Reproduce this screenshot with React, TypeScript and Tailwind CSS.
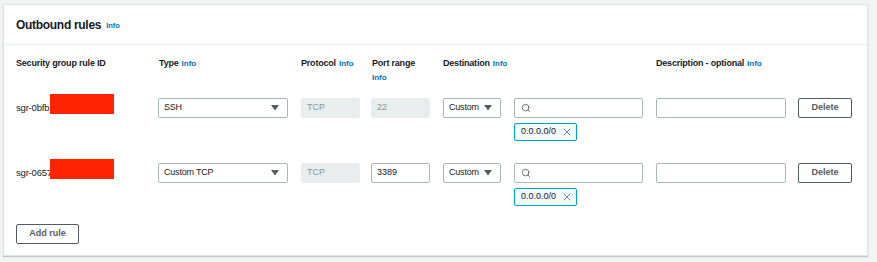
import * as React from 'react';
import { Search, X } from 'lucide-react';

type Rule = {
  id: string;
  type: string;
  protocol: string;
  port: string;
  portLocked: boolean;
};

const RULES: Rule[] = [
  { id: 'sgr-0bfb', type: 'SSH', protocol: 'TCP', port: '22', portLocked: true },
  { id: 'sgr-0657', type: 'Custom TCP', protocol: 'TCP', port: '3389', portLocked: false },
];

function Info() {
  return <span className="text-[8px] font-bold text-[#0073bb] ml-[3px] tracking-normal">Info</span>;
}

function Caret() {
  return (
    <svg width="8" height="6" viewBox="0 0 8 6" className="shrink-0">
      <path d="M0 0 L8 0 L4 5.5 Z" fill="#545b64" />
    </svg>
  );
}

function Select({ value, width }: { value: string; width: string }) {
  return (
    <div className={`${width} h-[20px] border border-[#aab7b8] rounded-[2px] bg-white flex items-center justify-between pl-[5px] pr-[8px] text-[9px] tracking-[-0.2px] text-[#16191f]`}>
      <span>{value}</span>
      <Caret />
    </div>
  );
}

function Disabled({ value }: { value: string }) {
  return (
    <div className="w-[59px] h-[20px] bg-[#eaeded] border border-[#eaeded] rounded-[2px] flex items-center pl-[5px] text-[9px] text-[#879596]">
      {value}
    </div>
  );
}

function RuleRow({ rule }: { rule: Rule }) {
  return (
    <div className="flex items-start">
      <div className="w-[142px] flex items-center h-[20px] text-[9.5px] text-[#16191f]">
        <span className="w-[34px] whitespace-nowrap tracking-[-0.2px]">{rule.id}</span>
        <span className="w-[64px] h-[20px] bg-[#ff2400] -mt-[8px] relative" />
      </div>
      <div className="w-[143px]">
        <Select value={rule.type} width="w-[130px]" />
      </div>
      <div className="w-[70px]">
        <Disabled value={rule.protocol} />
      </div>
      <div className="w-[72px]">
        {rule.portLocked ? (
          <Disabled value={rule.port} />
        ) : (
          <div className="w-[59px] h-[20px] border border-[#aab7b8] rounded-[2px] bg-white flex items-center pl-[5px] text-[9px] text-[#16191f]">
            {rule.port}
          </div>
        )}
      </div>
      <div className="w-[71px]">
        <Select value="Custom" width="w-[58px]" />
      </div>
      <div className="w-[142px] flex flex-col gap-[5px]">
        <div className="w-[129px] h-[20px] border border-[#aab7b8] rounded-[2px] bg-white flex items-center pl-[6px]">
          <Search size={10} strokeWidth={2} color="#545b64" />
        </div>
        <div className="w-[63px] h-[18px] border border-[#00a1c9] rounded-[2px] bg-[#f1faff] flex items-center justify-between pl-[6px] pr-[3px] text-[9px] text-[#16191f]">
          <span>0.0.0.0/0</span>
          <X size={12} strokeWidth={1.5} color="#545b64" />
        </div>
      </div>
      <div className="w-[142px]">
        <div className="w-[130px] h-[20px] border border-[#aab7b8] rounded-[2px] bg-white" />
      </div>
      <button className="w-[54px] h-[20px] border border-[#545b64] rounded-[2px] bg-white text-[9px] font-bold text-[#545b64] flex items-center justify-center">
        Delete
      </button>
    </div>
  );
}

export default function App() {
  return (
    <div className="w-[877px] h-[262px] bg-[#f2f3f3] pt-[4px] pl-[3px] font-['Liberation_Sans',Arial,sans-serif] overflow-hidden">
      <div className="w-[865px] h-[252px] bg-white border border-[#e1e4e4] shadow-[0_1px_1px_rgba(0,28,36,0.2)]">
        <div className="h-[40px] bg-white border-b border-[#eaeded] flex items-center pl-[12px]">
          <h2 className="text-[12px] font-bold tracking-[-0.3px] text-[#16191f]">Outbound rules</h2>
          <span className="text-[7.5px] font-bold text-[#0073bb] ml-[5px] mt-[2px]">Info</span>
        </div>
        <div className="pl-[12px] pt-[11px]">
          <div className="flex items-start text-[9px] tracking-[-0.2px] font-bold text-[#16191f] leading-[14px] h-[42px]">
            <div className="w-[142px]">Security group rule ID</div>
            <div className="w-[143px] pl-[1px]">Type<Info /></div>
            <div className="w-[70px]">Protocol<Info /></div>
            <div className="w-[72px] pl-[1px]">
              Port range
              <div><span className="text-[8px] font-bold text-[#0073bb] tracking-normal">Info</span></div>
            </div>
            <div className="w-[213px]">Destination<Info /></div>
            <div>Description - optional<Info /></div>
          </div>
          <div className="flex flex-col gap-[22px]">
            {RULES.map((r) => (
              <RuleRow key={r.id} rule={r} />
            ))}
          </div>
          <button className="mt-[18px] w-[63px] h-[20px] border border-[#545b64] rounded-[2px] bg-white text-[9px] font-bold text-[#545b64] flex items-center justify-center">
            Add rule
          </button>
        </div>
      </div>
    </div>
  );
}
